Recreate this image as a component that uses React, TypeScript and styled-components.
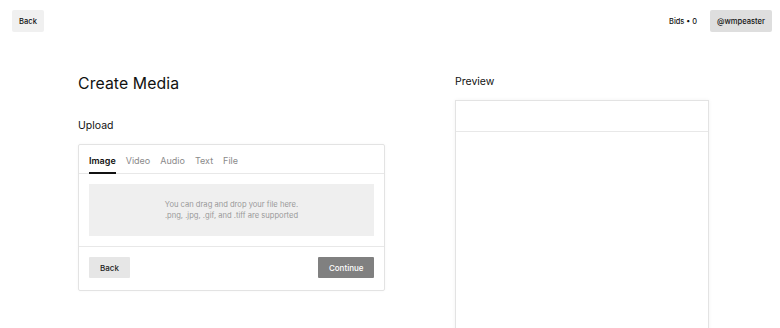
import React from "react";
import styled, { createGlobalStyle } from "styled-components";

const Global = createGlobalStyle`
  html, body { margin: 0; padding: 0; background: #fff; }
  body { font-family: Inter, "Noto Sans", sans-serif; color: #111; overflow: hidden; }
  * { box-sizing: border-box; }
`;

const Page = styled.div`
  width: 780px;
  height: 328px;
  overflow: hidden;
`;

const Header = styled.header`
  display: flex;
  align-items: center;
  justify-content: space-between;
  padding: 10px 8px 0 12px;
`;

const HeaderRight = styled.div`
  display: flex;
  align-items: center;
  gap: 13px;
`;

const GreyButton = styled.button<{ $tone?: "light" | "mid" }>`
  border: none;
  border-radius: 2px;
  font-family: Inter, sans-serif;
  font-size: 7.6px;
  font-weight: 500;
  color: #111;
  height: 22px;
  padding: 0 ${(p) => (p.$tone === "mid" ? "7px" : "7px")};
  background: ${(p) => (p.$tone === "mid" ? "#dedede" : "#f0f0f0")};
`;

const Bids = styled.span`
  font-size: 7.4px;
  font-weight: 500;
  color: #111;
`;

const Main = styled.main`
  display: flex;
  gap: 70px;
  padding: 38px 0 0 78px;
`;

const LeftCol = styled.section`
  width: 307px;
  display: flex;
  flex-direction: column;
`;

const Title = styled.h1`
  margin: 3px 0 0;
  font-size: 15.8px;
  font-weight: 400;
  line-height: 22px;
  letter-spacing: 0.1px;
`;

const Subtitle = styled.h2`
  margin: 24px 0 11px;
  font-size: 10.5px;
  font-weight: 400;
  line-height: 14px;
`;

const Card = styled.div`
  border: 1px solid #e3e3e3;
  border-radius: 2px;
  box-shadow: 0 0 3px rgba(0, 0, 0, 0.04);
`;

const Tabs = styled.div`
  display: flex;
  gap: 10px;
  padding: 0 10px;
  border-bottom: 1px solid #e8e8e8;
`;

const Tab = styled.div<{ $active?: boolean }>`
  font-size: 9px;
  padding: 10px 0 6px;
  color: ${(p) => (p.$active ? "#111" : "#8a8a8a")};
  font-weight: ${(p) => (p.$active ? 600 : 400)};
  border-bottom: 2px solid ${(p) => (p.$active ? "#111" : "transparent")};
  margin-bottom: -1px;
`;

const DropArea = styled.div`
  margin: 10px 10px;
  height: 52px;
  background: #efefef;
  display: flex;
  flex-direction: column;
  align-items: center;
  justify-content: center;
  font-size: 7.6px;
  line-height: 11px;
  color: #9a9a9a;
`;

const Footer = styled.div`
  display: flex;
  justify-content: space-between;
  align-items: center;
  border-top: 1px solid #e8e8e8;
  padding: 10px 10px 12px;
`;

const ActionButton = styled.button<{ $primary?: boolean }>`
  border: none;
  border-radius: 1px;
  font-family: Inter, sans-serif;
  font-size: 8px;
  font-weight: 500;
  height: 21px;
  padding: 0 ${(p) => (p.$primary ? "10.5px" : "11px")};
  color: ${(p) => (p.$primary ? "#fff" : "#222")};
  background: ${(p) => (p.$primary ? "#808080" : "#e6e6e6")};
`;

const RightCol = styled.section`
  width: 254px;
  display: flex;
  flex-direction: column;
  padding-top: 5px;
`;

const PreviewLabel = styled.h2`
  margin: 0 0 11px;
  font-size: 10.5px;
  font-weight: 400;
  line-height: 14px;
`;

const PreviewBox = styled.div`
  border: 1px solid #e3e3e3;
  box-shadow: 0 0 4px rgba(0, 0, 0, 0.05);
  height: 260px;
`;

const PreviewHead = styled.div`
  height: 31px;
  border-bottom: 1px solid #e8e8e8;
`;

export default function App() {
  return (
    <Page>
      <Global />
      <Header>
        <GreyButton>Back</GreyButton>
        <HeaderRight>
          <Bids>Bids • 0</Bids>
          <GreyButton $tone="mid">@wmpeaster</GreyButton>
        </HeaderRight>
      </Header>
      <Main>
        <LeftCol>
          <Title>Create Media</Title>
          <Subtitle>Upload</Subtitle>
          <Card>
            <Tabs>
              <Tab $active>Image</Tab>
              <Tab>Video</Tab>
              <Tab>Audio</Tab>
              <Tab>Text</Tab>
              <Tab>File</Tab>
            </Tabs>
            <DropArea>
              <span>You can drag and drop your file here.</span>
              <span>.png, .jpg, .gif, and .tiff are supported</span>
            </DropArea>
            <Footer>
              <ActionButton>Back</ActionButton>
              <ActionButton $primary>Continue</ActionButton>
            </Footer>
          </Card>
        </LeftCol>
        <RightCol>
          <PreviewLabel>Preview</PreviewLabel>
          <PreviewBox>
            <PreviewHead />
          </PreviewBox>
        </RightCol>
      </Main>
    </Page>
  );
}
